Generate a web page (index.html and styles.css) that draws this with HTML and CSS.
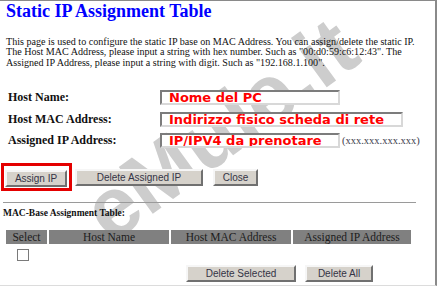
FILE: index.html
```html
<!DOCTYPE html>
<html lang="en">
<head>
  <meta charset="UTF-8">
  <meta name="viewport" content="width=device-width, initial-scale=1.0">
  <title>Static IP Assignment Table</title>
  <link rel="stylesheet" href="styles.css">
</head>
<body>
  <div class="frame">
    <div class="watermark">eMule.it</div>
    <div class="content">
      <h2 class="title">Static IP Assignment Table</h2>
      <p class="intro">This page is used to configure the static IP base on MAC Address. You can assign/delete the static IP.<br>
        The Host MAC Address, please input a string with hex number. Such as "00:d0:59:c6:12:43". The<br>
        Assigned IP Address, please input a string with digit. Such as "192.168.1.100".</p>

      <form class="fields">
        <label for="hostName">Host Name:</label>
        <div class="cell"><input type="text" id="hostName" class="field short" value="Nome del PC"></div>

        <label for="hostMac">Host MAC Address:</label>
        <div class="cell"><input type="text" id="hostMac" class="field long" value="Indirizzo fisico scheda di rete"></div>

        <label for="hostIp">Assigned IP Address:</label>
        <div class="cell"><input type="text" id="hostIp" class="field short" value="IP/IPV4 da prenotare"><span class="hint">(xxx.xxx.xxx.xxx)</span></div>
      </form>

      <div class="actions">
        <span class="mark"><button type="button" class="btn assign">Assign IP</button></span>
        <button type="button" class="btn del-assigned">Delete Assigned IP</button>
        <button type="button" class="btn close">Close</button>
      </div>

      <hr class="sep">

      <h3 class="subtitle">MAC-Base Assignment Table:</h3>
      <table class="list">
        <tr>
          <th class="c-select">Select</th>
          <th class="c-name">Host Name</th>
          <th class="c-mac">Host MAC Address</th>
          <th class="c-ip">Assigned IP Address</th>
        </tr>
        <tr>
          <td class="check-cell"><input type="checkbox" class="check"></td>
          <td></td>
          <td></td>
          <td></td>
        </tr>
      </table>

      <div class="bottom-actions">
        <button type="button" class="btn del-selected">Delete Selected</button>
        <button type="button" class="btn del-all">Delete All</button>
      </div>
    </div>
  </div>
</body>
</html>
```

FILE: styles.css
```css
/* General Styles */
body {
  margin: 0;
  background: #fff;
  font-family: "Liberation Serif", "Times New Roman", serif;
  color: #111;
}

.frame {
  position: relative;
  box-sizing: border-box;
  width: 437px;
  height: 286px;
  border-top: 1px solid #8a8a8a;
  border-right: 2px solid #8a8a8a;
  border-bottom: 1px solid #dcdcdc;
  overflow: hidden;
}

.watermark {
  position: absolute;
  left: 220px;
  top: 128px;
  transform: translate(-50%, -50%) rotate(-36deg);
  font: bold 84px "Liberation Sans", Arial, sans-serif;
  line-height: 1;
  color: #cdcdcd;
  white-space: nowrap;
  z-index: 0;
}

.content {
  position: relative;
  z-index: 1;
}

.title {
  margin: 0 0 0 6px;
  font-size: 18px;
  line-height: 20px;
  font-weight: bold;
  color: #0000ff;
}

.intro {
  margin: 15.5px 0 0 6px;
  font-size: 10.1px;
  line-height: 10.5px;
  white-space: nowrap;
}

/* Form */
.fields {
  display: grid;
  grid-template-columns: 152px auto;
  grid-auto-rows: 21.5px;
  margin: 19px 0 0 8px;
}

.fields label {
  display: flex;
  align-items: center;
  font-size: 12px;
  font-weight: bold;
}

.cell {
  display: flex;
  align-items: center;
}

.field {
  box-sizing: border-box;
  height: 15px;
  margin: 0;
  padding: 0 2px 0 7px;
  border: 2px solid;
  border-color: #7c7c7c #d8d8d8 #d8d8d8 #7c7c7c;
  background: #fff;
  font: bold 13px "DejaVu Sans", Verdana, sans-serif;
  color: #ff0000;
  outline: none;
}

.field.short {
  width: 180px;
}

.field.long {
  width: 243px;
}

.hint {
  margin-left: 2px;
  font-size: 10.5px;
  color: #3a3a4a;
}

/* Buttons */
.actions {
  display: flex;
  align-items: center;
  margin: 11.5px 0 0 1px;
}

.mark {
  display: inline-block;
  padding: 2px 2px 1px 1px;
  border: 3px solid #e40000;
}

.btn {
  box-sizing: border-box;
  height: 17px;
  margin: 0;
  padding: 0;
  border: 2px solid;
  border-color: #f6f6f6 #707070 #707070 #f6f6f6;
  background: #d6d2cb;
  font: 10px "Liberation Sans", Arial, sans-serif;
  color: #343446;
}

.assign {
  width: 62px;
}

.del-assigned {
  width: 128px;
  margin-left: 3px;
}

.close {
  width: 45px;
  margin-left: 10px;
}

.sep {
  width: 413px;
  height: 0;
  margin: 11px 0 0 3px;
  border: 0;
  border-top: 1px solid #9a9a9a;
}

.subtitle {
  margin: 5.3px 0 0 3px;
  font-size: 9.5px;
  line-height: 11px;
  font-weight: bold;
}

/* Table */
.list {
  margin: 10.7px 0 0 4px;
  border-spacing: 2px 0;
}

.list th {
  height: 14px;
  padding: 0;
  background: #808080;
  font-size: 11.5px;
  line-height: 14px;
  font-weight: normal;
  color: #1c1c1c;
}

.c-select { width: 41px; }
.c-name { width: 120px; }
.c-mac { width: 120px; }
.c-ip { width: 118px; }

.list td {
  padding: 0;
}

.check-cell {
  padding-top: 5px !important;
  padding-left: 11px !important;
  line-height: 0;
}

.check {
  appearance: none;
  box-sizing: border-box;
  width: 12px;
  height: 12px;
  margin: 0;
  border: 1px solid #7a7a7a;
  background: #fff;
}

.bottom-actions {
  display: flex;
  margin: 4px 0 0 186px;
}

.del-selected {
  width: 110px;
}

.del-all {
  width: 68px;
  margin-left: 9px;
}
```
